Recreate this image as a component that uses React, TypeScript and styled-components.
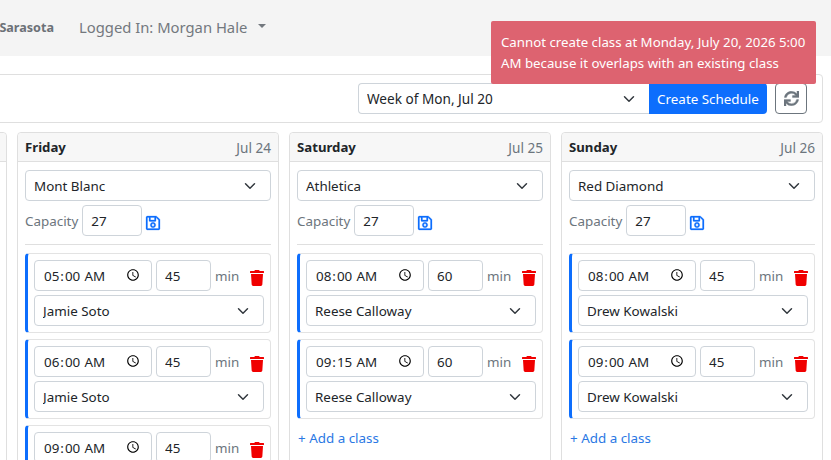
import React from 'react';
import styled, { createGlobalStyle } from 'styled-components';
import { FaRegSave, FaSync, FaTrash } from 'react-icons/fa';

const GlobalStyle = createGlobalStyle`
  html, body {
    margin: 0;
    height: 460px;
    overflow: hidden;
    background: #fff;
    font-family: "Noto Sans", "Open Sans", "Liberation Sans", sans-serif;
    font-size: 13.4px;
    color: #212529;
  }
  * { box-sizing: border-box; }
`;

const chevron = `url("data:image/svg+xml,%3csvg xmlns='http://www.w3.org/2000/svg' viewBox='0 0 16 16'%3e%3cpath fill='none' stroke='%23343a40' stroke-linecap='round' stroke-linejoin='round' stroke-width='2' d='m2 5 6 6 6-6'/%3e%3c/svg%3e")`;

const Page = styled.div`
  width: 1086px;
  margin-left: -255px;
`;

const Navbar = styled.nav`
  height: 56px;
  padding-bottom: 2px;
  background: #f4f4f4;
  display: flex;
  align-items: center;
  gap: 25px;
`;

const Brand = styled.span`
  width: 309px;
  text-align: right;
  font-size: 12.6px;
  font-weight: 700;
  color: #6c7177;
`;

const UserMenu = styled.span`
  font-size: 14.8px;
  color: #73787e;
  display: flex;
  align-items: center;
`;

const Caret = styled.i`
  margin-left: 11px;
  margin-top: -3px;
  border-top: 4.5px solid #73787e;
  border-left: 4.5px solid transparent;
  border-right: 4.5px solid transparent;
`;

const Toolbar = styled.section`
  margin: 18px 8px 0 0;
  height: 49px;
  border: 1px solid #dfdfdf;
  border-radius: 4px;
  display: flex;
  align-items: center;
  justify-content: flex-end;
  padding-right: 15px;
`;

const Select = styled.select`
  appearance: none;
  display: block;
  width: 100%;
  height: 31px;
  padding: 0 30px 0 8px;
  font: inherit;
  color: #212529;
  background: #fff ${chevron} no-repeat right 12px center / 16px 12px;
  border: 1px solid #ced4da;
  border-radius: 4px;
  outline: none;
`;

const WeekSelect = styled(Select)`
  width: 291px;
  border-radius: 4px 0 0 4px;
  border-right: 0;
  font-size: 13.6px;
`;

const PrimaryButton = styled.button`
  width: 118px;
  height: 31px;
  padding: 0;
  font: inherit;
  color: #fff;
  background: #0d6efd;
  border: 0;
  border-radius: 0 4px 4px 0;
`;

const RefreshButton = styled.button`
  width: 32px;
  height: 31px;
  margin-left: 8px;
  padding: 0;
  display: flex;
  align-items: center;
  justify-content: center;
  color: #6c757d;
  background: #fff;
  border: 1px solid #6c757d;
  border-radius: 4px;
  font-size: 15px;

  svg {
    stroke: currentColor;
    stroke-width: 12;
  }
`;

const Board = styled.div`
  margin-top: 9px;
  display: grid;
  grid-template-columns: repeat(4, 262px);
  gap: 10px;
`;

const DayCard = styled.article`
  border: 1px solid #dfdfdf;
  border-radius: 4px;
  background: #fff;
`;

const DayHeader = styled.header`
  height: 29px;
  padding: 0 7px;
  display: flex;
  align-items: center;
  justify-content: space-between;
  background: #f7f7f7;
  border-bottom: 1px solid #dfdfdf;
  border-radius: 4px 4px 0 0;
`;

const DayName = styled.strong`
  font-size: 13.2px;
  font-weight: 700;
`;

const DayDate = styled.span`
  color: #6c757d;
  font-size: 13.6px;
`;

const DayBody = styled.div`
  padding: 8px 7px;
`;

const CapacityRow = styled.div`
  margin-top: 4px;
  height: 31px;
  display: flex;
  align-items: center;
  color: #6c757d;
`;

const TextInput = styled.input<{ $width: number }>`
  flex: none;
  width: ${(p) => p.$width}px;
  height: 31px;
  padding: 0 8px;
  font: inherit;
  color: #212529;
  background: #fff;
  border: 1px solid #ced4da;
  border-radius: 4px;
  outline: none;
`;

const CapacityInput = styled(TextInput)`
  margin-left: 4px;
`;

const SaveIcon = styled(FaRegSave)`
  margin: 4px 0 0 3px;
  color: #0d6efd;
  font-size: 16px;
  stroke: currentColor;
  stroke-width: 8;
`;

const Divider = styled.hr`
  margin: 8px 0;
  border: 0;
  border-top: 1px solid #dfdfdf;
`;

const ClassCard = styled.div`
  height: 80px;
  margin-bottom: 6px;
  padding: 6px 6px 0 6px;
  border: 1px solid #e3e3e3;
  border-left: 3px solid #0d6efd;
  border-radius: 4px;
`;

const ClassRow = styled.div`
  display: flex;
  align-items: center;
  margin-bottom: 4px;
`;

const TimeInput = styled(TextInput)`
  margin-right: 4px;
  &::-webkit-calendar-picker-indicator {
    margin-left: 0;
  }
`;

const Unit = styled.span`
  flex: none;
  margin-left: 4px;
  width: 34px;
  color: #6c757d;
`;

const TrashIcon = styled(FaTrash)`
  flex: none;
  margin-top: 4px;
  color: #f00000;
  font-size: 16px;
`;

const AddLink = styled.a`
  display: block;
  margin-top: 10px;
  margin-left: 1px;
  color: #2a78e4;
`;

const Toast = styled.div`
  position: fixed;
  top: 21px;
  left: 491px;
  width: 325px;
  height: 63px;
  padding: 11px 10px;
  font-size: 13.25px;
  line-height: 21px;
  color: #fff;
  background: #dd6370;
  border-radius: 2px;
`;

type ClassItem = { time: string; minutes: number; coach: string };
type Day = { name: string; date: string; studio: string; classes: ClassItem[]; open: boolean };

const days: Day[] = [
  {
    name: 'Friday',
    date: 'Jul 24',
    studio: 'Mont Blanc',
    open: false,
    classes: [
      { time: '05:00', minutes: 45, coach: 'Jamie Soto' },
      { time: '06:00', minutes: 45, coach: 'Jamie Soto' },
      { time: '09:00', minutes: 45, coach: 'Jamie Soto' },
    ],
  },
  {
    name: 'Saturday',
    date: 'Jul 25',
    studio: 'Athletica',
    open: true,
    classes: [
      { time: '08:00', minutes: 60, coach: 'Reese Calloway' },
      { time: '09:15', minutes: 60, coach: 'Reese Calloway' },
    ],
  },
  {
    name: 'Sunday',
    date: 'Jul 26',
    studio: 'Red Diamond',
    open: true,
    classes: [
      { time: '08:00', minutes: 45, coach: 'Drew Kowalski' },
      { time: '09:00', minutes: 45, coach: 'Drew Kowalski' },
    ],
  },
];

const ClassEntry: React.FC<{ item: ClassItem }> = ({ item }) => (
  <ClassCard>
    <ClassRow>
      <TimeInput $width={118} type="time" defaultValue={item.time} />
      <TextInput $width={55} defaultValue={item.minutes} />
      <Unit>min</Unit>
      <TrashIcon />
    </ClassRow>
    <Select defaultValue={item.coach}>
      <option>{item.coach}</option>
    </Select>
  </ClassCard>
);

const DayColumn: React.FC<{ day: Day }> = ({ day }) => (
  <DayCard>
    <DayHeader>
      <DayName>{day.name}</DayName>
      <DayDate>{day.date}</DayDate>
    </DayHeader>
    <DayBody>
      <Select defaultValue={day.studio}>
        <option>{day.studio}</option>
      </Select>
      <CapacityRow>
        Capacity
        <CapacityInput $width={60} defaultValue={27} />
        <SaveIcon />
      </CapacityRow>
      <Divider />
      {day.classes.map((item) => (
        <ClassEntry key={item.time} item={item} />
      ))}
      {day.open && <AddLink>+ Add a class</AddLink>}
    </DayBody>
  </DayCard>
);

export default function App() {
  return (
    <>
      <GlobalStyle />
      <Page>
        <Navbar>
          <Brand>Sarasota</Brand>
          <UserMenu>
            Logged In: Morgan Hale
            <Caret />
          </UserMenu>
        </Navbar>
        <Toolbar>
          <WeekSelect defaultValue="Week of Mon, Jul 20">
            <option>Week of Mon, Jul 20</option>
          </WeekSelect>
          <PrimaryButton>Create Schedule</PrimaryButton>
          <RefreshButton>
            <FaSync />
          </RefreshButton>
        </Toolbar>
        <Board>
          <DayCard>
            <DayHeader />
          </DayCard>
          {days.map((day) => (
            <DayColumn key={day.name} day={day} />
          ))}
        </Board>
      </Page>
      <Toast>Cannot create class at Monday, July 20, 2026 5:00 AM because it overlaps with an existing class</Toast>
    </>
  );
}
